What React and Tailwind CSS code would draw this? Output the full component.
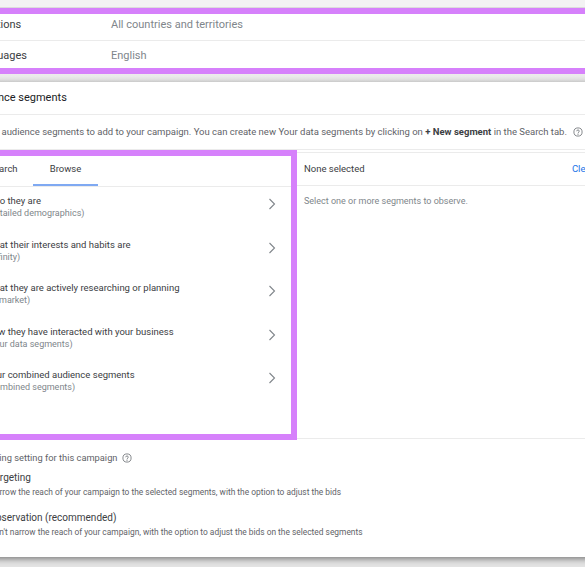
import React from "react";

const Chevron = () => (
  <svg width="8" height="12" viewBox="0 0 8 12" className="mt-[3px] mr-[15px] shrink-0">
    <polyline points="1.5,1 6.5,6 1.5,11" fill="none" stroke="#80868b" strokeWidth="1.1" />
  </svg>
);

const Help = ({ className = "" }) => (
  <svg width="10" height="10" viewBox="0 0 20 20" className={className}>
    <circle cx="10" cy="10" r="8.2" fill="none" stroke="#5f6368" strokeWidth="1.5" />
    <path d="M7.4 7.7a2.6 2.6 0 0 1 5.1.6c0 1.7-2.5 2.2-2.5 3.7" fill="none" stroke="#5f6368" strokeWidth="1.5" strokeLinecap="round" />
    <circle cx="10" cy="14.4" r="1" fill="#5f6368" />
  </svg>
);

const items = [
  ["Who they are", "(Detailed demographics)"],
  ["What their interests and habits are", "(Affinity)"],
  ["What they are actively researching or planning", "(In-market)"],
  ["How they have interacted with your business", "(Your data segments)"],
  ["Your combined audience segments", "(Combined segments)"],
];

export default function App() {
  return (
    <div className="w-[585px] h-[567px] overflow-hidden bg-[#e3e3e3] font-['Roboto',_'Liberation_Sans',_sans-serif]">
      <div className="h-[8px] bg-[#f3f3f3] border-b border-[#dcdcdc]" />
      <div className="ml-[-27px] w-[640px] bg-white border-y-[6px] border-[#d681fb]">
        <div className="h-[27px] border-b border-[#ebebeb] flex pt-[3px] text-[11px] leading-[16px]">
          <div className="w-[138px] text-[#3c4043]">Locations</div>
          <div className="text-[#80868b]">All countries and territories</div>
        </div>
        <div className="h-[27px] flex pt-[7px] text-[11px] leading-[16px]">
          <div className="w-[138px] text-[#3c4043]">Languages</div>
          <div className="text-[#80868b]">English</div>
        </div>
      </div>
      <div className="h-[8px] bg-gradient-to-b from-[#ececec] to-[#e3e3e3]" />
      <div className="ml-[-27px] w-[640px] h-[475px] bg-white shadow-[0_2px_6px_rgba(0,0,0,0.45)] flex flex-col">
        <div className="h-[33px] shrink-0 border-b border-[#ebebeb] flex items-center text-[11px] text-[#202124]">
          <span className="ml-[-3px]">Audience segments</span>
        </div>
        <div className="h-[35px] shrink-0 border-b border-[#ebebeb] flex items-center text-[9.5px] text-[#5f6368] whitespace-nowrap">
          <span>
            Select audience segments to add to your campaign. You can create new Your data segments by clicking on{" "}
            <span className="font-bold text-[#3c4043]">+ New segment</span> in the Search tab.
          </span>
          <Help className="ml-[6px]" />
        </div>
        <div className="flex shrink-0">
          <div className="w-[324px] h-[290px] shrink-0 border-t-[6px] border-r-[6px] border-b-[6px] border-[#d681fb] flex flex-col">
            <div className="h-[31px] border-b border-[#ebebeb] flex text-[9.5px] leading-[12px]">
              <div className="w-[60px] flex justify-center pt-[7px] text-[#3c4043]">Search</div>
              <div className="w-[65px] flex flex-col items-center justify-between pt-[7px] text-[#3c4043]">
                <span>Browse</span>
                <div className="w-full h-[2px] bg-[#7fa9f2]" />
              </div>
            </div>
            {items.map(([a, b]) => (
              <div key={a} className="h-[43.5px] flex justify-between pl-[13px] pt-[8px]">
                <div className="flex flex-col leading-[12px]">
                  <span className="text-[9.5px] text-[#3c4043]">{a}</span>
                  <span className="text-[9px] text-[#80868b]">{b}</span>
                </div>
                <Chevron />
              </div>
            ))}
          </div>
          <div className="w-[330px] shrink-0 mt-[2px] h-[287px] border-t border-b border-[#ebebeb] flex flex-col">
            <div className="h-[33px] border-b border-[#ebebeb] flex items-center justify-between pl-[7px] pr-[21px] text-[9.5px]">
              <span className="text-[#3c4043]">None selected</span>
              <span className="text-[#1a73e8]">Clear all</span>
            </div>
            <div className="pl-[7px] pt-[9px] text-[9px] leading-[12px] text-[#80868b]">
              Select one or more segments to observe.
            </div>
          </div>
        </div>
        <div className="flex flex-col pt-[12px] whitespace-nowrap">
          <div className="flex items-center text-[9.3px] leading-[12px] text-[#5f6368]">
            <span>Targeting setting for this campaign</span>
            <Help className="ml-[4px]" />
          </div>
          <div className="mt-[8px] flex">
            <div className="w-[10px] h-[10px] rounded-full border border-[#5f6368] mt-[1px] mr-[6px]" />
            <div className="flex flex-col">
              <span className="text-[10px] leading-[12px] text-[#3c4043]">Targeting</span>
              <span className="mt-[2px] text-[8.4px] leading-[12px] text-[#5f6368]">
                Narrow the reach of your campaign to the selected segments, with the option to adjust the bids
              </span>
            </div>
          </div>
          <div className="mt-[14px] flex">
            <div className="w-[10px] h-[10px] rounded-full border-[3px] border-[#1a73e8] mt-[1px] mr-[6px]" />
            <div className="flex flex-col">
              <span className="text-[10px] leading-[12px] text-[#3c4043]">Observation (recommended)</span>
              <span className="mt-[2px] text-[8.4px] leading-[12px] text-[#5f6368]">
                Don't narrow the reach of your campaign, with the option to adjust the bids on the selected segments
              </span>
            </div>
          </div>
        </div>
      </div>
    </div>
  );
}
